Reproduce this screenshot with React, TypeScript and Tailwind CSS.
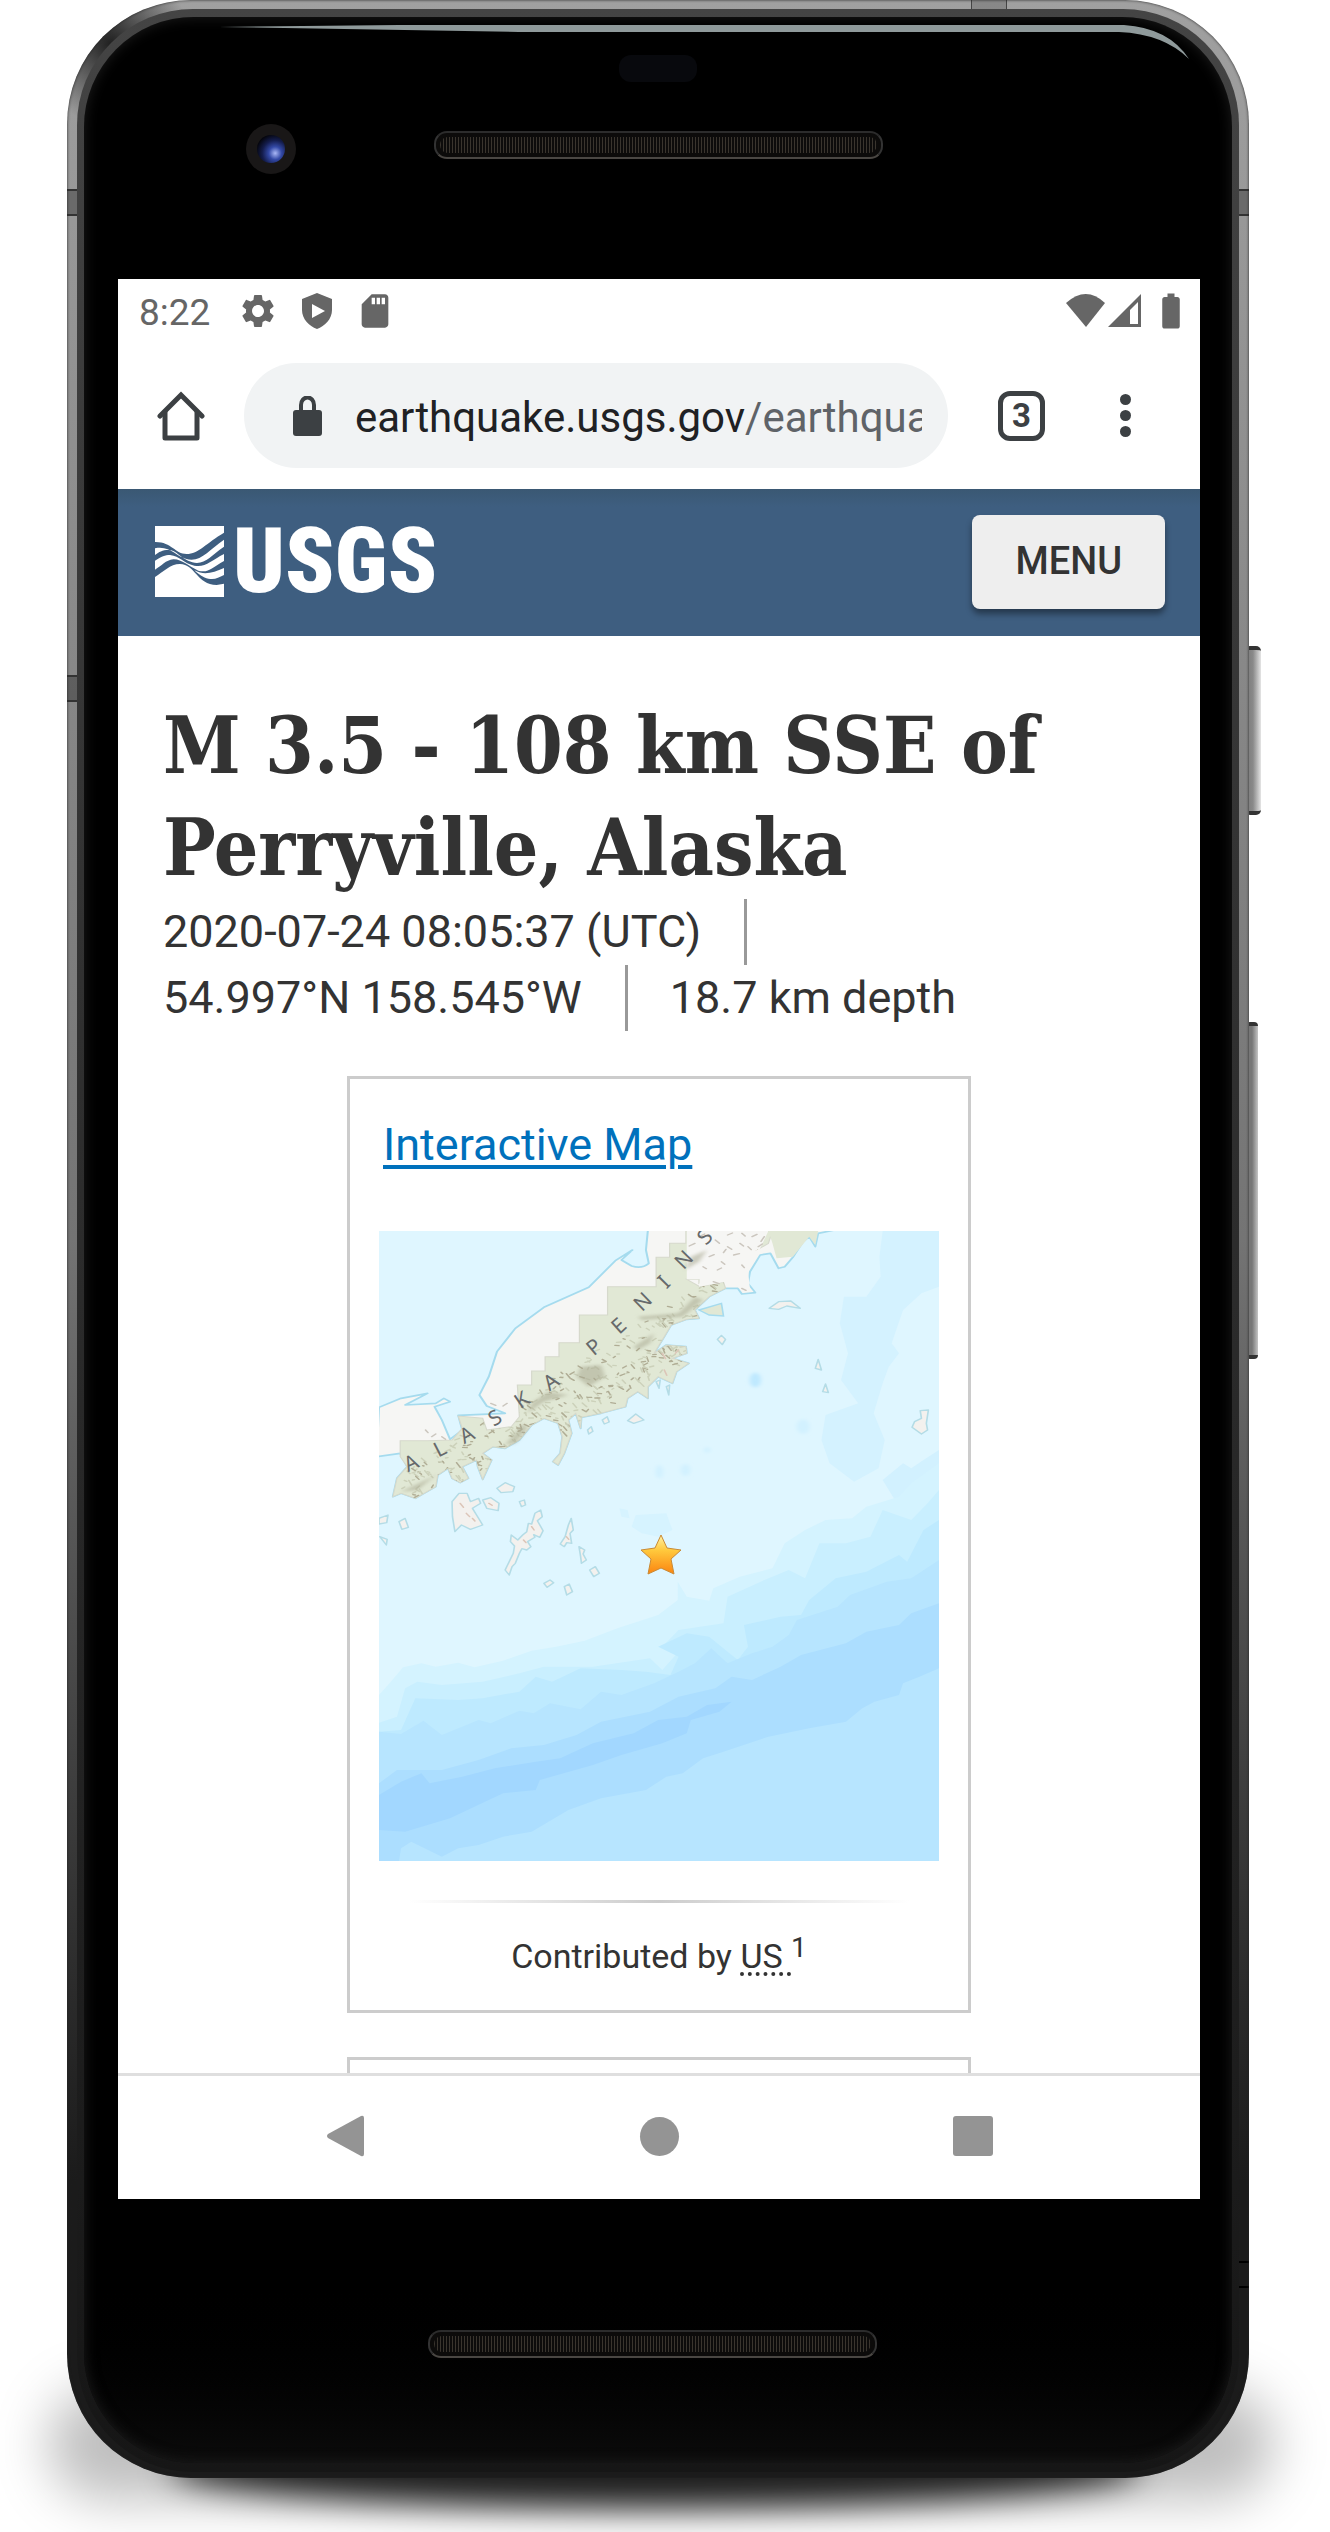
import React from "react";
import { MdBatteryFull, MdSdCard, MdSettings } from "react-icons/md";

const GREEN_LAND =
  "M808 520H848V483H1060L1050 520L880 640V628H850L882 650L940 636L945 655L905 680L870 720L880 745L850 748L812 765L795 800L770 850L800 825L848 830L850 850L815 865L855 880L825 905L815 940L780 920L755 950L755 985L730 965L705 985L700 1010L640 1030L592 1042L590 1075L578 1030L560 1050L568 1090L550 1150L535 1185L522 1175L540 1150L545 1100L535 1060L500 1045L470 1065L440 1110L405 1135L375 1130L350 1150L372 1170L350 1228L338 1190L335 1170L300 1190L315 1225L295 1238L275 1225L265 1195L240 1215L235 1250L185 1285L150 1270L130 1280L140 1225L165 1190L148 1160V1112H215L275 1110L300 1075L290 1038L350 1045L360 1080L420 1070L440 1040L435 945H470V903H503V860H537V818H587V735H656V650H775V562H808Z";

const LAND_LETTERS = [
  { c: "A", x: 32, y: 232, r: -25 },
  { c: "L", x: 61, y: 218, r: -27 },
  { c: "A", x: 88, y: 204, r: -28 },
  { c: "S", x: 116, y: 187, r: -31 },
  { c: "K", x: 143, y: 169, r: -34 },
  { c: "A", x: 172, y: 151, r: -35 },
  { c: "P", x: 215, y: 116, r: -40 },
  { c: "E", x: 240, y: 95, r: -42 },
  { c: "N", x: 264, y: 71, r: -44 },
  { c: "I", x: 285, y: 51, r: -45 },
  { c: "N", x: 305, y: 29, r: -46 },
  { c: "S", x: 326, y: 6, r: -46 },
];

function ridges(count: number) {
  let seed = 7;
  const next = () => {
    seed = (seed * 16807) % 2147483647;
    return seed / 2147483647;
  };
  return Array.from({ length: count }, () => {
    const t = next();
    const x = 150 + t * 950;
    const y = 1250 - t * 720 + (next() - 0.25) * 190;
    const dx = 3 + next() * 9;
    const dy = (next() - 0.35) * 22;
    return { d: `M${x.toFixed(0)} ${y.toFixed(0)}l${dx.toFixed(0)} ${dy.toFixed(0)}`, dark: next() > 0.6 };
  });
}
const RIDGES = ridges(620);

const ISLETS = [
  "M1052 715L1075 695L1105 693L1128 715L1095 708L1075 718Z",
  "M925 808L935 796L945 808L937 824Z",
  "M1165 895L1172 868L1180 900Z",
  "M1183 965L1190 942L1197 968Z",
  "M1408 1055L1425 1045L1422 1022L1442 1020L1437 1060L1440 1080L1425 1092L1402 1072Z",
  "M705 1052L725 1032L745 1050L720 1060Z",
  "M643 1050L655 1040L660 1056L648 1062Z",
  "M607 1080L616 1070L620 1084L610 1092Z",
  "M385 1255L405 1238L428 1250L424 1265L395 1268Z",
  "M275 1295L292 1270L312 1270L320 1295L340 1285L345 1300L325 1315L335 1335L350 1365L320 1378L298 1365L282 1385L276 1340Z",
  "M350 1290L370 1283L390 1300L388 1322L360 1315Z",
  "M440 1295L452 1290L455 1305L445 1310Z",
  "M96 1345L118 1335L115 1358L96 1362Z",
  "M145 1355L160 1345L168 1372L152 1378Z",
  "M98 1400L116 1408L114 1425Z",
  "M478 1330L492 1320L496 1340L484 1352L498 1382L490 1402L475 1394L478 1402L460 1415L468 1430L458 1440L446 1436L440 1450L430 1480L422 1490L415 1515L405 1500L425 1450L428 1428L418 1415L420 1395L436 1410L448 1395L458 1385L462 1360L470 1362Z",
  "M560 1365L567 1345L572 1380L564 1390L568 1420L556 1418L550 1430L540 1422L552 1400Z",
  "M586 1430L600 1440L596 1452L604 1470L592 1480L590 1460Z",
  "M612 1500L626 1490L636 1510L622 1520Z",
  "M500 1540L515 1530L524 1538L508 1552Z",
  "M550 1550L562 1542L570 1565L556 1575Z",
  "M775 935L785 930L782 955Z",
  "M800 950L808 945L806 975Z",
];

function LocationMap() {
  return (
    <svg viewBox="0 0 560 630" className="block w-full" role="img" aria-label="Map of the epicenter south of the Alaska Peninsula">
      <defs>
        <clipPath id="green-land">
          <path d={GREEN_LAND} />
        </clipPath>
        <linearGradient id="star-fill" x1="0" y1="0" x2="0" y2="1">
          <stop offset="0" stopColor="#fff3a8" />
          <stop offset="0.4" stopColor="#ffc83c" />
          <stop offset="1" stopColor="#fb8410" />
        </linearGradient>
        <filter id="soft">
          <feGaussianBlur stdDeviation="5" />
        </filter>
      </defs>
      <rect width="560" height="630" fill="#dff6ff" />
      <g transform="scale(0.40816 0.33333) translate(-96 -483)">
        <path
          fill="#d4f2ff"
          d="M1330 483L1322 560L1325 620L1290 680L1235 680L1225 760L1245 850L1228 930L1270 1000L1190 1035L1180 1110L1200 1180L1260 1235L1320 1195L1335 1110L1308 1030L1330 940L1345 890L1370 850L1352 820L1380 720L1425 670L1468 650V483Z"
        />
        <path fill="#d2f1ff" d="M1468 1140L1430 1170L1400 1195L1380 1180L1330 1230L1360 1290L1300 1340L1468 1340Z" />
        <g fill="#bfe9ff" filter="url(#soft)">
          <ellipse cx="1018" cy="930" rx="14" ry="22" />
          <ellipse cx="1135" cy="1070" rx="16" ry="22" fill="#d2f1ff" />
          <ellipse cx="847" cy="1200" rx="12" ry="18" fill="#d2f1ff" />
          <ellipse cx="783" cy="1205" rx="10" ry="20" fill="#d2f1ff" />
          <ellipse cx="900" cy="1140" rx="8" ry="8" fill="#d2f1ff" />
        </g>
      </g>
      <g transform="scale(0.40816 0.33333) translate(-96 807)">
        <path fill="#d6f3ff" d="M725 45L800 40L815 90L780 110L740 100L715 80ZM685 25L705 30L710 55L690 50Z" />
        <path
          fill="#d4f3ff"
          d="M96 585L125 545L155 502L200 490L235 500L290 488L330 502L400 482L470 452L530 440L600 422L680 385L780 345L828 300V245L850 290L905 302L915 265L980 230L1060 205L1090 130L1140 90L1190 60L1255 55L1290 20L1370 -10L1400 -50L1468 -110V1083H96Z"
        />
        <path
          fill="#c9efff"
          d="M96 668L140 650L160 565L190 545L250 555L350 545L440 520L500 500L620 500L760 475L790 510L830 455L790 440L830 390L940 370L950 290L1040 240L1100 210L1140 235L1175 130L1240 130L1300 110L1330 30L1400 60L1440 10L1468 -30V1083H96Z"
        />
        <path
          fill="#beeaff"
          d="M96 695L150 690L185 595L290 600L350 595L440 575L480 530L520 545L590 505L690 510L750 515L810 525L830 470L780 440L850 400L905 410L975 480L1000 440L990 375L1080 350L1130 345L1150 300L1215 235L1290 215L1370 165L1390 185L1430 90L1468 60V1083H96Z"
        />
        <path
          fill="#b7e5ff"
          d="M96 695L150 702L205 662L250 705L280 690L340 660L370 670L440 632L475 640L515 610L590 628L640 575L690 585L770 550L830 515L870 490L910 445L950 490L1010 460L1060 440L1100 405L1120 360L1220 320L1250 285L1340 245L1400 235L1468 180V1083H96Z"
        />
        <path
          fill="#acdeff"
          d="M96 850L140 810L250 810L340 780L420 745L500 735L580 705L640 665L760 635L830 590L920 565L960 530L1010 540L1080 500L1130 465L1240 430L1290 395L1370 375L1400 340L1468 310V505L1420 530L1380 550L1370 585L1310 605L1280 625L1240 665L1150 685L1050 710L940 755L890 775L840 820L800 830L750 870L640 895L560 930L470 995L400 1010L340 1035L290 1045L250 1070L175 1025L150 1045L145 1083H96Z"
        />
        <path
          fill="#a2d7ff"
          d="M96 885L150 845L200 820L220 850L300 830L380 805L480 785L540 775L620 730L720 700L780 660L850 650L900 615L960 605L930 635L860 660L850 700L790 730L690 765L620 795L490 840L480 870L400 880L270 955L160 995L96 990Z"
        />
      </g>
      <g transform="scale(0.40816 0.33333) translate(-96 -483)">
        <path
          fill="#f6f6f4"
          stroke="#a5dbee"
          strokeWidth="5"
          strokeLinejoin="round"
          d="M755 478L750 540L757 580Q740 598 715 588L690 570L717 540L675 572L610 652L500 712L430 775L385 845L365 920L342 975L360 1008L405 1030L290 1036L300 1080L270 1108L250 1050L232 1010L270 995L255 985L235 1000L160 1005L215 970L150 985L96 1012L90 1160L148 1150L165 1190L140 1225L130 1280L150 1270L185 1285L235 1250L240 1215L265 1195L275 1225L295 1238L315 1225L300 1190L335 1170L338 1190L350 1228L372 1170L350 1150L375 1130L405 1135L440 1110L470 1065L500 1045L535 1060L545 1100L540 1150L522 1175L535 1185L550 1150L568 1090L560 1050L578 1030L590 1075L592 1042L640 1030L700 1010L705 985L730 965L755 985L755 950L780 920L815 940L825 905L855 880L815 865L850 850L848 830L800 825L770 850L795 800L812 765L850 748L880 745L870 720L905 680L945 655L975 655L985 672L1018 668L1000 640L1005 605L1030 555L1055 550L1075 595L1090 590L1110 562L1135 515L1150 500L1165 530L1172 490L1220 478Z"
        />
        <path fill="#e1e8d5" stroke="#d6d9cc" strokeWidth="3" d={GREEN_LAND} />
        <path fill="#f6f6f4" d="M850 483H1050L1020 560L1000 600L1005 660L940 636L880 650L882 628H850Z" />
        <path fill="#e1e8d5" d="M1050 483H1172L1165 525L1150 500L1110 560L1070 565L1060 520Z" />
        <path fill="#e1e8d5" stroke="#a5dbee" strokeWidth="4" d="M880 720L935 700L940 738L905 735Z" />
        <g fill="none" strokeWidth="4" strokeLinecap="round" clipPath="url(#green-land)">
          {RIDGES.map((ridge, i) => (
            <path key={i} d={ridge.d} stroke={ridge.dark ? "#b0ad95" : "#ccd1ba"} />
          ))}
        </g>
        <g fill="#a9a991" opacity="0.55" filter="url(#soft)">
          <path d="M590 890L640 885L650 920L610 950L580 920Z" />
          <path d="M470 1000L510 965L560 975L500 995L460 1030Z" />
          <path d="M730 740L830 730L870 680L890 690L840 740L740 750Z" />
          <path d="M720 830L770 790L760 820L730 840Z" />
          <path d="M150 1265L220 1225L240 1210L190 1260Z" />
          <path d="M405 1125L450 1060L460 1075L430 1120Z" />
          <path d="M860 560L900 540L880 575L845 600Z" />
        </g>
        <g fill="none" stroke="#cbc6be" strokeWidth="4" strokeLinecap="round">
          <path d="M880 500l14 -8M920 510l10 10M950 495l12 -6M980 520l9 8M905 560l12 -6M935 575l8 8M965 555l14 -4M1000 530l8 9M925 600l10 -6M890 590l8 6M985 585l6 8M1010 500l12 -7M870 520l-14 8M950 530l10 8M985 490l8 8M940 548l6 -10M1040 500l-8 14M1025 530l10 -8M915 635l14 6M985 655l10 6M370 1000l12 6M400 1008l10 -8M440 1000l10 8M225 1100l10 -8M250 1100l9 8M210 1080l6 8" />
        </g>
        <g fill="#f3f1ee" stroke="#b4dce6" strokeWidth="4" strokeLinejoin="round">
          {ISLETS.map((d) => (
            <path key={d} d={d} />
          ))}
        </g>
        <g fill="none" stroke="#dcc5b8" strokeWidth="4" strokeLinecap="round">
          <path d="M295 1300l8 12M310 1330l8 10M325 1345l6 8M365 1300l8 6M470 1370l6 10M450 1410l6 8M555 1400l6 8M790 850l8 16M830 840l-8 10M795 900l6 16" />
        </g>
      </g>
      <g fill="#66696b" fontFamily="'Noto Sans', sans-serif" fontSize="21" textAnchor="middle">
        {LAND_LETTERS.map((l, i) => (
          <text key={i} transform={`translate(${l.x} ${l.y}) rotate(${l.r})`} y="7">
            {l.c}
          </text>
        ))}
      </g>
      <path
        d="M282 304L288 317L302 319L292 328L295 343L282 337L269 343L272 328L262 319L276 317Z"
        fill="url(#star-fill)"
        stroke="#c98a35"
        strokeWidth="1"
        strokeLinejoin="round"
      />
    </svg>
  );
}

function UsgsMark() {
  return (
    <svg viewBox="0 0 207 213" className="h-[71px] w-[69px]" fill="#fff" aria-hidden="true">
      <path d="M0 0H207V20C155 50 130 84 95 84C60 84 50 47 0 48Z" />
      <path d="M0 213V153C25 138 45 114 75 114C120 114 125 176 185 177L207 173V213Z" />
      <path d="M0 67C45 58 65 92 92 98C135 112 160 73 207 41V62C165 90 150 118 112 109C75 97 65 72 40 72C22 72 12 78 0 87Z" />
      <path d="M0 104C20 92 30 87 45 87C75 90 85 112 118 119C150 126 170 103 207 84V105C170 126 160 142 130 134C100 120 80 99 55 100C32 102 20 120 0 131Z" />
      <path d="M118 133C150 150 175 139 207 126V147C190 155 180 162 160 158C145 156 130 144 118 133Z" />
    </svg>
  );
}

function Grille({ className }: { className: string }) {
  return (
    <div
      className={`absolute left-1/2 h-7 w-[449px] rounded-[13px] border-2 border-t-[#2c2c2c] border-r-[#333] border-b-[#4a4743] border-l-[#333] bg-[#0c0b0a] p-1 ${className}`}
    >
      <div className="h-full rounded-lg bg-[repeating-linear-gradient(90deg,#3a352e_0_1px,#0d0c0b_1px_3px)]" />
    </div>
  );
}

function StatusBar() {
  return (
    <div className="flex h-[63px] items-center pr-2 pl-[21px] text-[#666]">
      <span className="pt-1 text-[37px] leading-none">8:22</span>
      <MdSettings className="ml-7 size-10" />
      <svg viewBox="0 0 30 36" className="ml-[24px] h-9 w-[30px]" fill="currentColor" aria-hidden="true">
        <path fillRule="evenodd" d="M15 0L30 6V17C30 26 23 33 15 36C7 33 0 26 0 17V6ZM10 11V25L23 18Z" />
      </svg>
      <MdSdCard className="ml-[23px] size-10" />
      <svg viewBox="0 0 39 33" className="ml-auto h-[33px] w-[39px]" fill="currentColor" aria-hidden="true">
        <path d="M0 9Q20 -9 39 9L20 33Z" />
      </svg>
      <svg viewBox="0 0 33 33" className="ml-[3px] h-[33px] w-[33px]" fill="currentColor" aria-hidden="true">
        <path fillRule="evenodd" d="M33 0V33H0ZM30 8L22 16V30H30Z" />
      </svg>
      <MdBatteryFull className="ml-[9px] size-[42px]" />
    </div>
  );
}

function BrowserBar() {
  return (
    <div className="flex h-[147px] items-center text-[#3c4043]">
      <button type="button" aria-label="Home" className="flex w-[126px] justify-center">
        <svg viewBox="0 0 48 50" className="h-[50px] w-12" fill="none" stroke="currentColor" strokeWidth="5" strokeLinecap="round" strokeLinejoin="round" aria-hidden="true">
          <path d="M3 25L24 4L45 25" strokeLinejoin="miter" />
          <path d="M8 21V47H40V21" />
        </svg>
      </button>
      <div className="flex h-[105px] min-w-0 flex-1 items-center rounded-full bg-[#f1f3f4] pr-[26px] pl-[42px]">
        <svg viewBox="0 0 29 40" className="mx-[7px] h-10 w-[29px] shrink-0" fill="currentColor" aria-hidden="true">
          <rect y="14" width="29" height="26" rx="3" />
          <path d="M8 15V9A6 7 0 0 1 21 9V15" fill="none" stroke="currentColor" strokeWidth="4" />
        </svg>
        <a href="#page" className="ml-[26px] min-w-0 flex-1 overflow-hidden pt-1 text-[42px] leading-[63px] whitespace-nowrap text-[#202124]">
          earthquake.usgs.gov<span className="text-[#5f6368]">/earthquakes</span>
        </a>
      </div>
      <button type="button" aria-label="Open tabs" className="ml-[50px] flex h-[50px] w-[47px] items-center justify-center rounded-xl border-5 border-current text-[33px] leading-none font-bold">
        3
      </button>
      <button type="button" aria-label="More options" className="mr-[68px] ml-[75px] flex w-3 flex-col gap-[5px]">
        <span className="h-[11px] w-[11px] rounded-full bg-current" />
        <span className="h-[11px] w-[11px] rounded-full bg-current" />
        <span className="h-[11px] w-[11px] rounded-full bg-current" />
      </button>
    </div>
  );
}

function EventPage() {
  return (
    <div id="page" className="text-[#333]">
      <header className="flex h-[147px] items-center bg-[#3e5e80] bg-linear-to-b from-[#3a5873] from-0% to-[#3e5e80] to-12% pr-[35px] pb-[2px] pl-[37px] text-white">
        <a href="#home" aria-label="USGS home" className="flex items-center gap-[9px]">
          <UsgsMark />
          <span className="font-['Roboto_Condensed',Roboto,sans-serif] text-[90px] leading-[72px] font-black">USGS</span>
        </a>
        <button type="button" className="ml-auto h-[94px] rounded-lg bg-[#eee] px-[43px] text-[38px] font-medium text-[#333] shadow-[0_5px_6px_rgba(0,0,0,0.4)]">
          MENU
        </button>
      </header>
      <main className="px-[45px] pt-[59px]">
        <h1 className="font-['DejaVu_Serif_Condensed','DejaVu_Serif',serif] text-[78px] leading-[102px] font-bold">
          M 3.5 - 108 km SSE of Perryville, Alaska
        </h1>
        <ul className="flex flex-wrap text-[45px] leading-[66px]">
          <li className="mr-[42px] border-r-3 border-[#999] pr-[43px]">2020-07-24 08:05:37 (UTC)</li>
          <li className="mr-[42px] border-r-3 border-[#999] pr-[43px]">54.997°N 158.545°W</li>
          <li>18.7 km depth</li>
        </ul>
        <section className="mx-auto mt-[45px] max-w-[624px] border-3 border-[#ccc] px-[29px] pt-[33px] pb-[28px]">
          <a href="#map" className="px-1 text-[45px] leading-[66px] text-[#0071bc] underline decoration-4 underline-offset-[5px]">
            Interactive Map
          </a>
          <div className="mt-[53px]">
            <LocationMap />
          </div>
          <div className="mx-[30px] mt-[39px] h-[3px] bg-linear-to-r from-transparent via-[#ccc] to-transparent" />
          <p className="mt-7 text-center text-[34px] leading-[51px]">
            Contributed by{" "}
            <abbr title="USGS National Earthquake Information Center" className="underline decoration-dotted decoration-4 underline-offset-4">
              US&nbsp;
            </abbr>
            <sup className="static align-[11px] text-[28px] leading-none">1</sup>
          </p>
        </section>
        <section className="mx-auto mt-[44px] h-4 max-w-[624px] border-3 border-b-0 border-[#ccc]" />
      </main>
    </div>
  );
}

function NavBar() {
  return (
    <nav className="grid h-[126px] grid-cols-3 items-center justify-items-center border-t-3 border-[#dfdfdf] px-[70px] pb-[3px] text-[#949494]">
      <button type="button" aria-label="Back">
        <svg viewBox="0 0 37 42" className="h-[42px] w-[37px]" fill="currentColor" aria-hidden="true">
          <path d="M34 1Q37 0 37 3V39Q37 42 34 41L1 23Q-1 21 1 19Z" />
        </svg>
      </button>
      <button type="button" aria-label="Home screen" className="size-[39px] rounded-full bg-current" />
      <button type="button" aria-label="Recent apps" className="size-10 rounded-[3px] bg-current" />
    </nav>
  );
}

export default function App() {
  return (
    <div className="relative overflow-hidden bg-white pb-[54px] font-[Roboto,sans-serif]">
      <div className="absolute right-14 bottom-8 left-12 h-28 rounded-[100px] bg-black/25 blur-[26px]" />
      <div className="absolute right-[190px] bottom-6 left-[170px] h-20 rounded-[50%] bg-black/85 blur-[16px]" />
      <div className="relative mr-[81px] ml-[67px]">
        <div className="absolute top-[646px] -right-3 h-[169px] w-4 rounded-[5px] border-y-4 border-[#333] bg-linear-to-r from-[#777] via-[#8a8a8a] to-[#e5e5e5]" />
        <div className="absolute top-[1022px] -right-[9px] h-[337px] w-3 rounded-[4px] border-y-4 border-[#333] bg-linear-to-r from-[#777] via-[#777] to-[#c5c5c5]" />
        <div className="relative overflow-hidden rounded-[124px] bg-linear-to-b from-[#a0a0a0] from-0% via-[#747474] via-50% to-[#1b1b1b] to-88% px-[10px] pt-[9px] pb-[6px]">
          <div className="absolute top-[189px] right-0 left-0 h-[27px] border-y-2 border-[#333] bg-black/30" />
          <div className="absolute top-[675px] left-0 h-[27px] w-5 border-y-2 border-[#333] bg-black/30" />
          <div className="absolute right-0 bottom-[190px] h-[27px] w-5 border-y-2 border-black" />
          <div className="absolute top-0 right-[242px] h-4 w-9 border-x border-[#444] bg-black/15" />
          <div className="absolute top-0 left-0 size-[125px] bg-radial-[at_35%_35%] from-black/80 to-transparent to-70%" />
          <div className="absolute inset-0 rounded-[124px] shadow-[inset_0_0_3px_#222]" />
          <div className="relative rounded-[116px] bg-linear-to-b from-[#444] to-[#161616] px-[7px] pt-[8px] pb-[9px]">
            <div className="relative rounded-[110px] bg-black bg-linear-to-b from-black from-92% to-[#0c0c0c] pr-8 pl-[34px] shadow-[inset_0_0_14px_#1d1d1d]">
              <div className="h-[262px]">
                <svg viewBox="0 0 970 36" className="absolute top-[8px] right-[43px] h-9 w-[970px]" aria-hidden="true">
                  <path d="M0 2L180 0H905Q950 3 970 34Q945 9 900 7H300Z" fill="#8f9a9b" />
                </svg>
                <div className="absolute top-[38px] left-1/2 h-[27px] w-[78px] -translate-x-1/2 rounded-[12px] bg-[#08090d]" />
                <div className="absolute top-[107px] left-[162px] size-[50px] rounded-full bg-[#191717] p-[11px]">
                  <div className="size-full rounded-full bg-[radial-gradient(circle_at_65%_65%,#a9b7f5_0%,#3349a6_25%,#141d4d_50%,#05060e_75%)]" />
                </div>
                <Grille className="top-[114px] -translate-x-[224px]" />
              </div>
              <div className="bg-white">
                <StatusBar />
                <BrowserBar />
                <EventPage />
                <NavBar />
              </div>
              <div className="relative h-[264px]">
                <Grille className="top-[131px] -translate-x-[231px]" />
              </div>
            </div>
          </div>
        </div>
      </div>
    </div>
  );
}
